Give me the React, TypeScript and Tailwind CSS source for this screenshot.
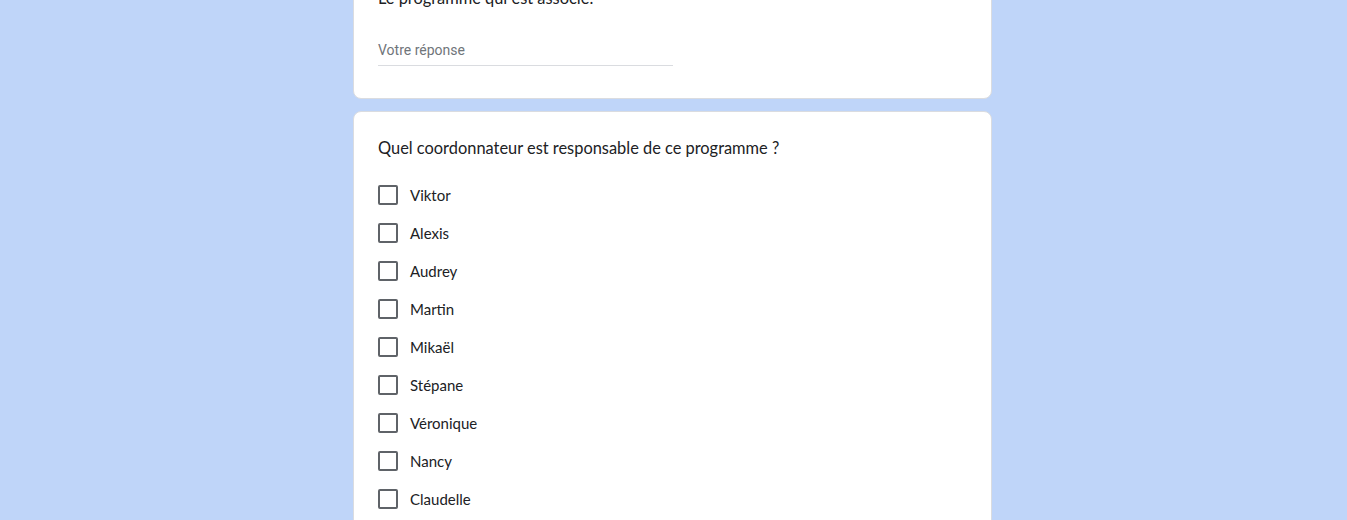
const names = ["Viktor", "Alexis", "Audrey", "Martin", "Mikaël", "Stépane", "Véronique", "Nancy", "Claudelle", "Autre"]

function Checkbox() {
  return <span className="w-5 h-5 shrink-0 rounded-[2px] border-2 border-[#5f6368] bg-white" />
}

export default function App() {
  return (
    <div className="min-h-screen bg-[#bfd5f9] flex justify-center overflow-hidden h-[520px] pr-[2px]">
      <div className="w-[639px] flex flex-col gap-3 -mt-[39px]">
        <div className="bg-white rounded-lg border border-[#dadce0] px-6 pt-6 pb-8">
          <p className="text-[16.4px] leading-6 text-[#202124] font-['Lato',sans-serif]">
            Le programme qui est associé.
          </p>
          <div className="mt-6 w-[295px] h-8 flex items-end pb-[5px] border-b border-[#dadce0]">
            <span className="text-[14px] leading-5 text-[#70757a] font-['Roboto',sans-serif]">Votre réponse</span>
          </div>
        </div>

        <div className="bg-white rounded-lg border border-[#dadce0] px-6 pt-6 pb-6">
          <p className="text-[16.4px] leading-6 text-[#202124] font-['Lato',sans-serif]">
            Quel coordonnateur est responsable de ce programme ?
          </p>
          <div className="mt-4 flex flex-col">
            {names.map((n) => (
              <label key={n} className="h-[38px] flex items-center gap-3">
                <Checkbox />
                <span className="text-[15px] text-[#202124] font-['Lato',sans-serif]">{n}</span>
              </label>
            ))}
          </div>
        </div>
      </div>
    </div>
  )
}
